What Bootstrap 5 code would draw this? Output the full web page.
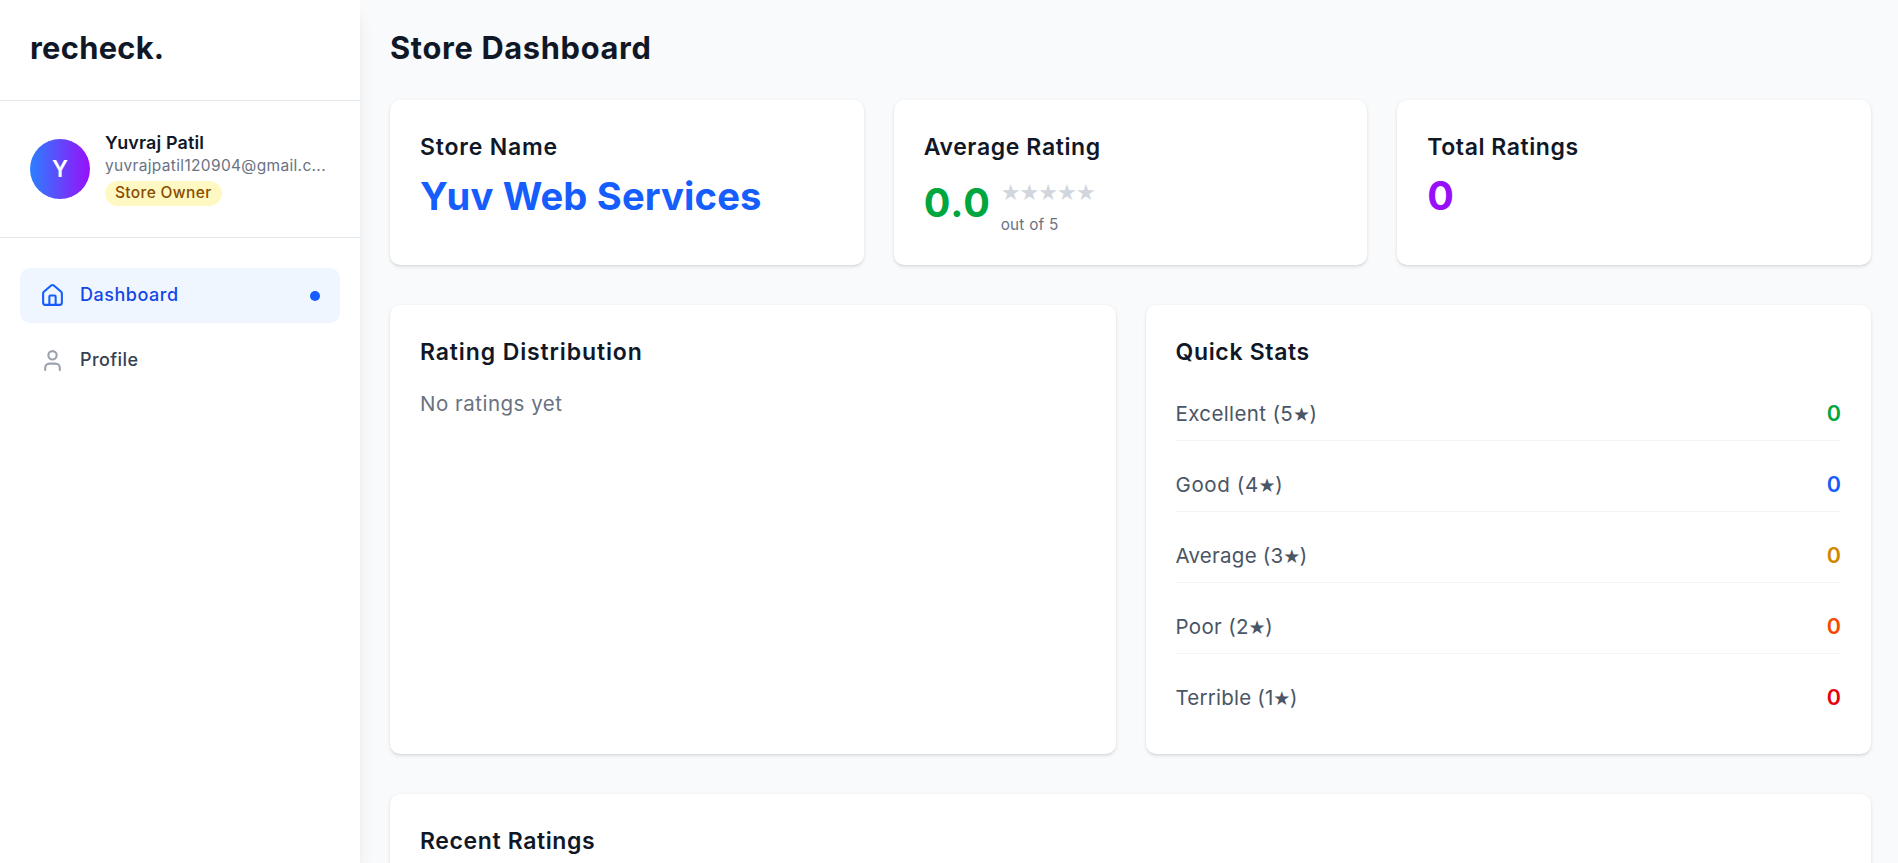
<!DOCTYPE html>
<html lang="en">
<head>
<meta charset="utf-8">
<meta name="viewport" content="width=device-width, initial-scale=1">
<title>recheck. – Store Dashboard</title>
<link href="https://cdn.jsdelivr.net/npm/bootstrap@5.3.0/dist/css/bootstrap.min.css" rel="stylesheet">
<style>
html{font-size:20px}
body{font-family:Inter,"Open Sans",sans-serif;font-size:20px;line-height:30px;background:#f9fafb;color:#101828;height:100vh;overflow:hidden}
p,h1,h2,h3{margin:0}
.txt{--up:1px;line-height:calc(var(--lh) - 2*var(--up));padding-bottom:calc(2*var(--up));white-space:nowrap}
.sidebar{width:360px;z-index:2;box-shadow:0 12.5px 18.75px -3.75px rgba(0,0,0,.1),0 5px 7.5px -5px rgba(0,0,0,.1)}
.rule{border-bottom:1px solid #e5e7eb}
.brand{padding:30px;height:101px}
.heading{--lh:40px;--up:2px;font-size:30.8px;font-weight:700}
.profile{padding:30px;height:137px}
.avatar{width:60px;height:60px;font-size:22.5px;font-weight:600;background:linear-gradient(90deg,#2b7fff,#9810fa);flex:none}
.who{margin-left:15px;height:76px}
.uname{--lh:25px;--up:.5px;font-size:17.9px;font-weight:600;letter-spacing:.15px}
.mail{--lh:20px;--up:0px;font-size:15.5px;color:#6a7282;letter-spacing:.33px}
.role{display:block;width:117px;height:25px;margin-top:5px;border-radius:13px;background:#fef9c2;color:#894b00;font-size:15.5px;font-weight:500;line-height:24px;padding-left:10px;letter-spacing:.36px;white-space:nowrap}
.menu{padding:30px 20px;gap:10px}
.menu a{height:55px;border-radius:10px;padding:0 20px;color:#364153;text-decoration:none;font-size:18px;font-weight:500}
.menu a.current{background:#eff6ff;color:#1447e6}
.menu svg{width:25px;height:25px;margin-right:15px;fill:none;stroke:#99a1af;stroke-width:2;stroke-linecap:round;stroke-linejoin:round}
.menu .current svg{stroke:#155dfc}
.menu .txt{--lh:25px}
.dot{width:10px;height:10px;border-radius:50%;background:#155dfc;margin-top:1px}
.main{padding:30px 27px 0 30px}
.grid3,.grid2{display:grid;gap:30px;margin-bottom:40px}
.grid3{grid-template-columns:repeat(3,1fr);margin-top:30px}
.grid2{grid-template-columns:repeat(2,1fr)}
.panel{background:#fff;border-radius:10px;padding:30px;box-shadow:0 1.25px 3.75px rgba(0,0,0,.1),0 1.25px 2.5px -1.25px rgba(0,0,0,.1)}
.grid3 .panel{height:165px}
.grid2 .panel{height:449px}
.ptitle{--lh:35px;--up:.25px;font-size:23px;font-weight:600}
.big{--lh:45px;font-size:38.2px;font-weight:700;letter-spacing:.13px}
.score{--up:2px;font-size:39.5px;letter-spacing:1px;width:77px;color:#00a63e}
.total{font-size:39.5px;color:#9810fa}
.stars{font:22px/36px "DejaVu Sans",sans-serif;letter-spacing:-.9px;color:#d1d5dc;height:40px}
.outof{--lh:20px;--up:0px;font-size:15.3px;color:#6a7282;letter-spacing:.24px}
.stat{padding:10px 0;height:51px;border-bottom:1px solid #f3f4f6;color:#4a5565;font-size:20.5px}
.stat:last-child{border:0;height:50px}
.stat .txt,.empty{--lh:30px}
.stat i{font:19px/1 "DejaVu Sans",sans-serif;letter-spacing:0;margin:0 -.4px 0 -.3px}
.stat b{--up:1.5px;font-weight:600;font-size:21.5px}
.empty{color:#6a7282;font-size:20.5px;letter-spacing:.5px}
</style>
</head>
<body class="d-flex">
<aside class="sidebar bg-white vh-100 flex-shrink-0 position-relative">
  <div class="brand rule"><h1 class="heading txt" style="letter-spacing:.3px">recheck.</h1></div>
  <div class="profile rule d-flex align-items-start">
    <div class="avatar rounded-circle text-white d-flex align-items-center justify-content-center align-self-center">Y</div>
    <div class="who">
      <p class="uname txt">Yuvraj Patil</p>
      <p class="mail txt">yuvrajpatil120904@gmail.c...</p>
      <span class="role">Store Owner</span>
    </div>
  </div>
  <nav class="menu d-flex flex-column">
    <a href="#" class="current d-flex align-items-center">
      <svg viewBox="0 0 24 24"><path d="M15 21v-8a1 1 0 0 0-1-1h-4a1 1 0 0 0-1 1v8"/><path d="M3 10a2 2 0 0 1 .709-1.528l7-5.999a2 2 0 0 1 2.582 0l7 5.999A2 2 0 0 1 21 10v9a2 2 0 0 1-2 2H5a2 2 0 0 1-2-2z"/></svg>
      <span class="txt" style="letter-spacing:.52px">Dashboard</span><span class="dot ms-auto"></span>
    </a>
    <a href="#" class="d-flex align-items-center">
      <svg viewBox="0 0 24 24"><path d="M19 21v-2a4 4 0 0 0-4-4H9a4 4 0 0 0-4 4v2"/><circle cx="12" cy="7" r="4"/></svg>
      <span class="txt" style="letter-spacing:.4px">Profile</span>
    </a>
  </nav>
</aside>
<main class="main flex-grow-1">
  <h1 class="heading txt" style="letter-spacing:.66px">Store Dashboard</h1>
  <section class="grid3">
    <div class="panel">
      <h2 class="ptitle txt" style="letter-spacing:.8px">Store Name</h2>
      <p class="big txt" style="margin-top:10px;color:#155dfc">Yuv Web Services</p>
    </div>
    <div class="panel">
      <h2 class="ptitle txt" style="letter-spacing:.62px">Average Rating</h2>
      <div class="d-flex align-items-center" style="margin-top:10px">
        <p class="big score txt">0.0</p>
        <div><div class="stars">★★★★★</div><p class="outof txt">out of 5</p></div>
      </div>
    </div>
    <div class="panel">
      <h2 class="ptitle txt" style="letter-spacing:.56px">Total Ratings</h2>
      <p class="big total txt" style="margin-top:10px">0</p>
    </div>
  </section>
  <section class="grid2">
    <div class="panel">
      <h2 class="ptitle txt" style="letter-spacing:.88px">Rating Distribution</h2>
      <p class="empty txt" style="margin-top:20px">No ratings yet</p>
    </div>
    <div class="panel">
      <h2 class="ptitle txt" style="margin-bottom:20px;letter-spacing:.66px">Quick Stats</h2>
      <div class="d-flex flex-column" style="gap:20px">
        <div class="stat d-flex justify-content-between"><span class="txt" style="letter-spacing:.38px">Excellent (5<i>★</i>)</span><b class="txt" style="color:#00a63e">0</b></div>
        <div class="stat d-flex justify-content-between"><span class="txt" style="letter-spacing:.62px">Good (4<i>★</i>)</span><b class="txt" style="color:#155dfc">0</b></div>
        <div class="stat d-flex justify-content-between"><span class="txt" style="letter-spacing:.25px">Average (3<i>★</i>)</span><b class="txt" style="color:#d08700">0</b></div>
        <div class="stat d-flex justify-content-between"><span class="txt" style="letter-spacing:.32px">Poor (2<i>★</i>)</span><b class="txt" style="color:#f54900">0</b></div>
        <div class="stat d-flex justify-content-between"><span class="txt" style="letter-spacing:.22px">Terrible (1<i>★</i>)</span><b class="txt" style="color:#e7000b">0</b></div>
      </div>
    </div>
  </section>
  <section class="panel" style="min-height:200px"><h2 class="ptitle txt" style="letter-spacing:.62px">Recent Ratings</h2></section>
</main>
<script src="https://cdn.jsdelivr.net/npm/bootstrap@5.3.0/dist/js/bootstrap.bundle.min.js"></script>
</body>
</html>
